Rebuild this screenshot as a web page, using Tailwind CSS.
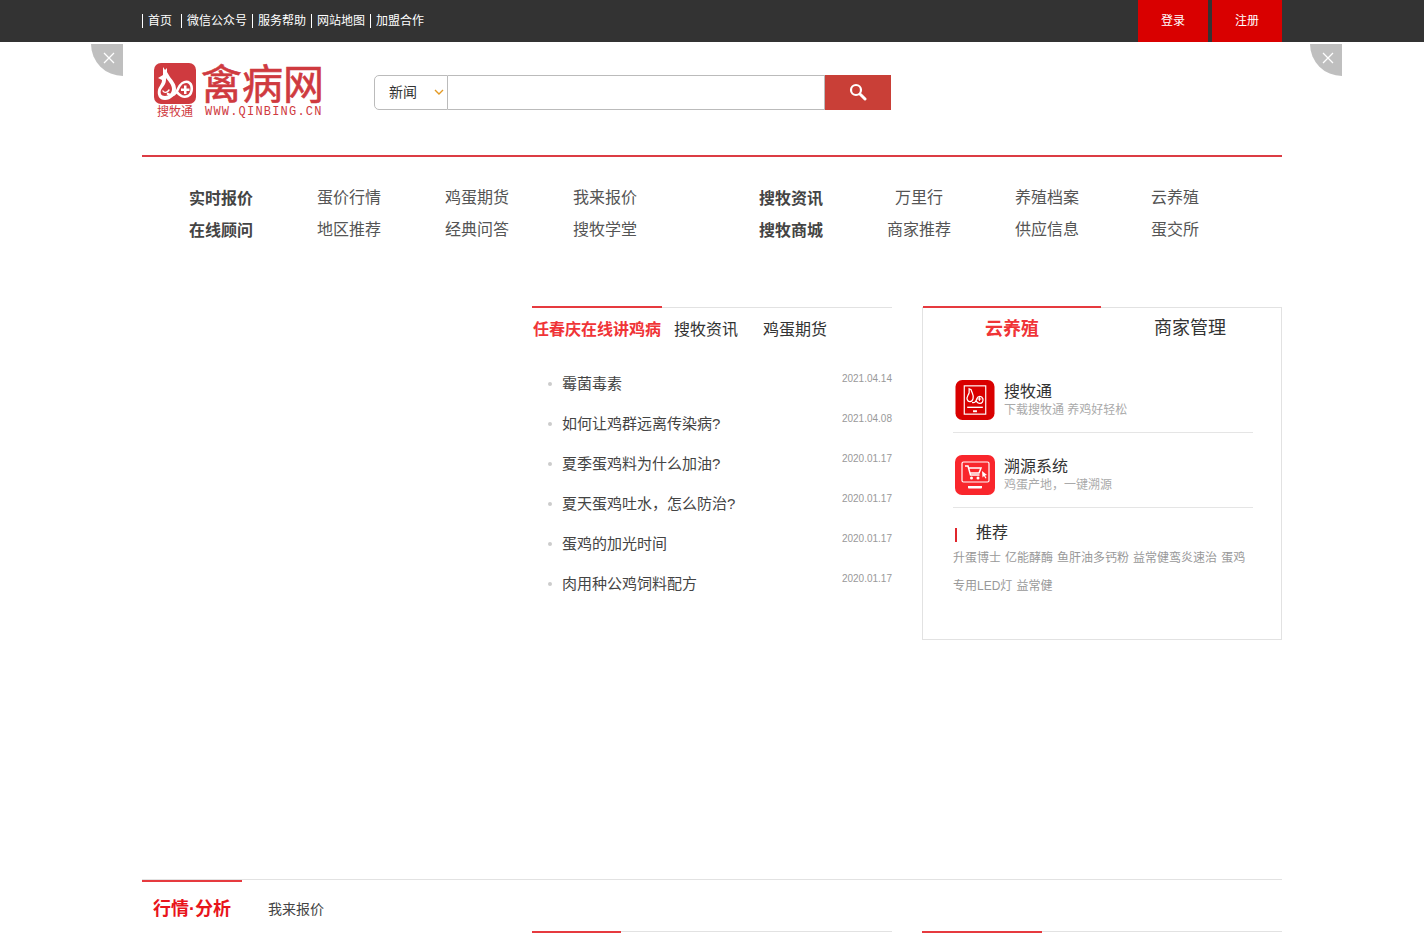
<!DOCTYPE html>
<html lang="zh-CN">
<head>
<meta charset="utf-8">
<title>禽病网</title>
<script src="https://cdn.jsdelivr.net/npm/@tailwindcss/browser@4"></script>
</head>
<body class="bg-white text-[#333] font-['Liberation_Sans','Noto_Sans_CJK_SC',sans-serif]">
<div class="relative h-[933px] overflow-hidden">
  <!-- top bar -->
  <div class="h-[42px] bg-[#333]">
    <div class="mx-auto flex h-full w-[1140px] items-center justify-between">
      <div class="flex items-center text-xs leading-[14px] text-white">
        <a class="w-[39px] border-l border-white pl-[5px]">首页</a>
        <a class="w-[71px] border-l border-white pl-[5px]">微信公众号</a>
        <a class="w-[59px] border-l border-white pl-[5px]">服务帮助</a>
        <a class="w-[59px] border-l border-white pl-[5px]">网站地图</a>
        <a class="border-l border-white pl-[5px]">加盟合作</a>
      </div>
      <div class="flex h-full gap-[4px] text-xs text-white">
        <a class="flex h-full w-[70px] items-center justify-center bg-[#d90000]">登录</a>
        <a class="flex h-full w-[70px] items-center justify-center bg-[#d90000]">注册</a>
      </div>
    </div>
  </div>

  <!-- corner close buttons -->
  <div class="absolute left-[91px] top-[44px] flex h-8 w-8 items-start justify-end rounded-bl-[32px] bg-[#bfbfbf]">
    <svg class="mr-[8px] mt-[8px]" width="12" height="12" viewBox="0 0 12 12" fill="none" stroke="#fff" stroke-width="1.3"><path d="M1 1l10 10M11 1L1 11"/></svg>
  </div>
  <div class="absolute left-[1310px] top-[44px] flex h-8 w-8 items-start justify-end rounded-bl-[32px] bg-[#bfbfbf]">
    <svg class="mr-[8px] mt-[8px]" width="12" height="12" viewBox="0 0 12 12" fill="none" stroke="#fff" stroke-width="1.3"><path d="M1 1l10 10M11 1L1 11"/></svg>
  </div>

  <div class="mx-auto w-[1140px]">
    <!-- header -->
    <div class="flex h-[115px] border-b-2 border-[#dc3c44] pl-3">
      <div class="mt-[21px] flex h-[58px] w-[168px]">
        <div class="flex w-[43px] flex-col items-center">
          <svg width="42" height="41" viewBox="0 0 42 41">
            <rect width="42" height="41" rx="7" fill="#cf3a3f"/>
            <path d="M9 4l2 3 2-2 0 4 3 5c3 4 6 7 6 12 0 6-5 11-11 11S3 32 4 27c1-4 4-6 4-10l-4-2 5-3z" fill="#fff"/>
            <path d="M12 15c3 4 6 7 6 11 0 4-3 7-7 7-4 0-5-3-4-6 1-2 3-4 4-6 1-2 1-4 1-6z" fill="#cf3a3f"/>
            <g fill="none" stroke="#fff" stroke-linecap="round" stroke-linejoin="round">
              <path stroke-width="1.400" d="M9 28c1 2 4 2 6-1"/>
              <path stroke-width="2.600" d="M14 31C19 34 22 31 24 26 26 21 30 18 34 19 39 21 39 30 34 33 29 35 25 32 23 29"/>
            </g>
            <path d="M30 22.500h2.500v3h3V28h-3v3H30v-3h-3v-2.500h3z" fill="#fff"/>
          </svg>
          <span class="mt-[1px] text-[12px] leading-[14px] text-[#cf3a3f]">搜牧通</span>
        </div>
        <div class="ml-[5px] flex flex-col">
          <span class="mt-[2px] h-[40px] whitespace-nowrap text-[41px] leading-[40px] text-[#cf3a3f] [-webkit-text-stroke:0.6px_#cf3a3f]">禽病网</span>
          <span class="ml-[4px] whitespace-nowrap font-['Liberation_Mono'] text-[12px] leading-[14px] tracking-[1.2px] text-[#cf3a3f]">WWW.QINBING.CN</span>
        </div>
      </div>
      <div class="ml-[52px] mt-[33px] flex h-[35px] w-[517px]">
        <div class="flex w-[74px] items-center justify-between rounded-l-[5px] border border-[#bbb] pb-[1px] pl-[14px] pr-[3px] text-sm">
          <span>新闻</span>
          <svg width="10" height="6" viewBox="0 0 10 6" fill="none" stroke="#e39a24" stroke-width="1.4"><path d="M1 1l4 4 4-4"/></svg>
        </div>
        <div class="w-[377px] border-y border-r border-[#bbb]"></div>
        <div class="flex w-[66px] items-center justify-center bg-[#c93f37] pb-[2px]">
          <svg width="18" height="18" viewBox="0 0 18 18" fill="none" stroke="#fff"><circle cx="7" cy="7" r="5" stroke-width="2.2"/><path d="M11.500 11.500l4.500 4.500" stroke-width="3" stroke-linecap="round"/></svg>
        </div>
      </div>
    </div>

    <!-- nav -->
    <div class="flex h-[150px] items-start pl-[47px] pt-[25px] text-base leading-8 text-[#555]">
      <div class="grid w-[570px] grid-cols-[128px_128px_128px_128px] text-left">
        <a class="h-8 pt-px font-bold text-[#444]">实时报价</a><a>蛋价行情</a><a>鸡蛋期货</a><a>我来报价</a>
        <a class="h-8 pt-px font-bold text-[#444]">在线顾问</a><a>地区推荐</a><a>经典问答</a><a>搜牧学堂</a>
      </div>
      <div class="grid grid-cols-[128px_128px_136px_48px] text-center">
        <a class="h-8 w-16 pt-px font-bold text-[#444]">搜牧资讯</a><a class="w-16">万里行</a><a class="w-16">养殖档案</a><a class="w-12">云养殖</a>
        <a class="h-8 w-16 pt-px font-bold text-[#444]">搜牧商城</a><a class="w-16">商家推荐</a><a class="w-16">供应信息</a><a class="w-12">蛋交所</a>
      </div>
    </div>

    <!-- main -->
    <div class="flex h-[572px] pl-[390px]">
      <!-- news -->
      <div class="w-[360px]">
        <div class="relative h-[46px] border-t border-[#e2e2e2]">
          <div class="absolute -top-[2px] left-0 h-[2px] w-[130px] bg-[#e63a3f]"></div>
          <div class="flex pl-px pt-[11px] text-base leading-[22px]">
            <a class="font-bold text-[#f03437]">任春庆在线讲鸡病</a>
            <a class="ml-[13px]">搜牧资讯</a>
            <a class="ml-[25px]">鸡蛋期货</a>
          </div>
        </div>
        <ul class="pt-[10px] text-[15px] text-[#444]">
          <li class="flex h-10 justify-between"><span class="flex items-center pt-[2px]"><i class="ml-4 mr-[10px] h-1 w-1 rounded-full bg-[#ccc]"></i>霉菌毒素</span><time class="pt-[9px] text-[10px] leading-[14px] text-[#999]">2021.04.14</time></li>
          <li class="flex h-10 justify-between"><span class="flex items-center pt-[2px]"><i class="ml-4 mr-[10px] h-1 w-1 rounded-full bg-[#ccc]"></i>如何让鸡群远离传染病?</span><time class="pt-[9px] text-[10px] leading-[14px] text-[#999]">2021.04.08</time></li>
          <li class="flex h-10 justify-between"><span class="flex items-center pt-[2px]"><i class="ml-4 mr-[10px] h-1 w-1 rounded-full bg-[#ccc]"></i>夏季蛋鸡料为什么加油?</span><time class="pt-[9px] text-[10px] leading-[14px] text-[#999]">2020.01.17</time></li>
          <li class="flex h-10 justify-between"><span class="flex items-center pt-[2px]"><i class="ml-4 mr-[10px] h-1 w-1 rounded-full bg-[#ccc]"></i>夏天蛋鸡吐水，怎么防治?</span><time class="pt-[9px] text-[10px] leading-[14px] text-[#999]">2020.01.17</time></li>
          <li class="flex h-10 justify-between"><span class="flex items-center pt-[2px]"><i class="ml-4 mr-[10px] h-1 w-1 rounded-full bg-[#ccc]"></i>蛋鸡的加光时间</span><time class="pt-[9px] text-[10px] leading-[14px] text-[#999]">2020.01.17</time></li>
          <li class="flex h-10 justify-between"><span class="flex items-center pt-[2px]"><i class="ml-4 mr-[10px] h-1 w-1 rounded-full bg-[#ccc]"></i>肉用种公鸡饲料配方</span><time class="pt-[9px] text-[10px] leading-[14px] text-[#999]">2020.01.17</time></li>
        </ul>
      </div>
      <!-- side panel -->
      <div class="relative ml-[30px] h-[333px] w-[360px] border border-[#e2e2e2]">
        <div class="absolute left-0 -top-[2px] h-[2px] w-[178px] bg-[#e63a3f]"></div>
        <div class="flex h-[41px] text-lg leading-[43px]">
          <a class="w-[178px] text-center font-bold text-[#f03437]">云养殖</a>
          <a class="w-[178px] text-center leading-[41px]">商家管理</a>
        </div>
        <div class="ml-[30px] mr-[28px] mt-[20px]">
          <div class="flex h-[64px] items-start gap-[9px] border-b border-[#e5e5e5] pl-[2px] pt-[11px]">
            <svg width="40" height="40" viewBox="0 0 40 41" class="shrink-0">
              <rect width="40" height="41" rx="7" fill="#d90000"/>
              <rect x="9" y="6" width="22" height="29" fill="none" stroke="#fff" stroke-width="1.2"/>
              <path d="M12 28h16" stroke="#fff" stroke-width="1.4"/>
              <rect x="18" y="31" width="4" height="2" fill="#fff"/>
              <g fill="none" stroke="#fff" stroke-width="1.3">
                <path d="M14 9l2 1c1 4 3 5 2 9-1 4-5 4-6 1-1-2 1-4 2-7z"/>
                <path d="M17 23c3 1 4-1 5-4 1-3 5-3 6 0 1 3-1 5-3 5s-3-1-4-3"/>
              </g>
              <path d="M24 17.500h1v1.500h1.500v1H25v1.500h-1V20h-1.500v-1H24z" fill="#fff"/>
            </svg>
            <div class="pt-[2px]">
              <div class="text-base leading-[20px]">搜牧通</div>
              <div class="text-xs leading-[16px] text-[#aaa]">下载搜牧通 养鸡好轻松</div>
            </div>
          </div>
          <div class="flex h-[75px] items-start gap-[9px] border-b border-[#e5e5e5] pl-[2px] pt-[22px]">
            <svg width="40" height="40" viewBox="0 0 40 40" class="shrink-0">
              <rect width="40" height="40" rx="7" fill="#f9262c"/>
              <rect x="7" y="7" width="27" height="20" rx="1.500" fill="none" stroke="#fff" stroke-width="1.2"/>
              <path d="M13 31h14v1.500c0 .8-.7 1-1 1H14c-.5 0-1-.4-1-1z" fill="#fff"/>
              <path d="M10 11h3l2.500 9h9M14 13h12l-2 5H15" fill="none" stroke="#fff" stroke-width="1.500"/>
              <circle cx="16.500" cy="23" r="1.500" fill="#fff"/><circle cx="23" cy="23" r="1.500" fill="#fff"/>
              <path d="M27 16l5 4-2 .5 1.500 2.500-1 .5-1.500-2.500-1.500 1.500z" fill="#fff"/>
            </svg>
            <div class="pt-[2px]">
              <div class="text-base leading-[20px]">溯源系统</div>
              <div class="text-xs leading-[16px] text-[#aaa]">鸡蛋产地，一键溯源</div>
            </div>
          </div>
          <div class="flex h-[50px] items-center pl-[2px] pb-[1px] pt-[1px] text-base">
            <i class="mr-[19px] mt-[3px] h-[14px] w-[2px] bg-[#e0262c]"></i><span>推荐</span>
          </div>
          <p class="-mt-[14px] text-xs leading-7 text-[#999] [word-spacing:0.7px]">升蛋博士 亿能酵酶 鱼肝油多钙粉 益常健鸾炎速治 蛋鸡专用LED灯 益常健</p>
        </div>
      </div>
    </div>

    <!-- bottom -->
    <div class="relative h-[52px] border-t border-[#e2e2e2]">
      <div class="absolute top-0 left-0 h-[2px] w-[100px] bg-[#e63a3f]"></div>
      <div class="flex items-center pl-[11px] pt-[16px]">
        <span class="text-lg leading-[26px] font-bold text-[#e8141b]">行情·分析</span>
        <span class="ml-[37px] text-sm text-[#444]">我来报价</span>
      </div>
    </div>
    <div class="flex pl-[390px]">
      <div class="relative h-[2px] w-[360px] border-t border-[#e2e2e2]"><div class="absolute -top-px left-0 h-[2px] w-[89px] bg-[#e63a3f]"></div></div>
      <div class="relative ml-[30px] h-[2px] w-[360px] border-t border-[#e2e2e2]"><div class="absolute -top-px left-0 h-[2px] w-[120px] bg-[#e63a3f]"></div></div>
    </div>
  </div>
</div>
</body>
</html>
